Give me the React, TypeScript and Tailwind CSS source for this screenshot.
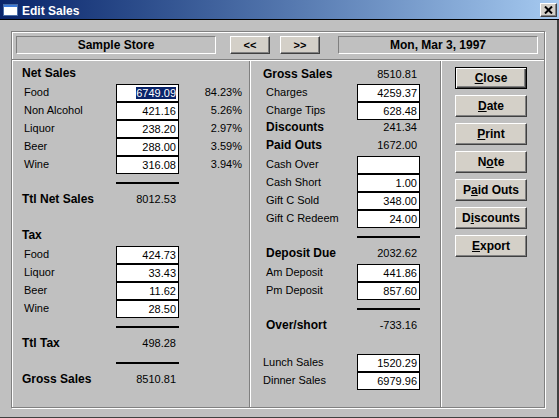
import React from 'react';

const raised =
  'border border-t-white border-l-white border-r-[#404040] border-b-[#404040] shadow-[inset_-1px_-1px_0_#808080]';

const Box = ({ value, selected }: { value?: string; selected?: boolean }) => (
  <div className="w-[63px] h-[18px] shrink-0 border border-black bg-white flex items-center justify-end pr-[2px] text-[11px] text-black">
    {selected ? <span className="bg-[#0a246a] text-white leading-[12px]">{value}</span> : value}
  </div>
);

const Header = ({ label, value, indent, className = '' }: { label: string; value?: string; indent?: boolean; className?: string }) => (
  <div className={`flex h-[18px] items-center ${className}`}>
    <div className={`w-[94px] shrink-0 text-[12px] font-bold ${indent ? 'pl-[3px]' : ''}`}>{label}</div>
    <div className="w-[63px] text-right pr-[3px] text-[11px]">{value}</div>
  </div>
);

const Row = ({ label, value, pct, selected, indent = 2 }: { label: string; value?: string; pct?: string; selected?: boolean; indent?: number }) => (
  <div className="flex h-[18px] items-center">
    <div className={`w-[94px] shrink-0 text-[11px] pb-[2px] ${indent === 3 ? 'pl-[3px]' : indent === 0 ? '' : 'pl-[2px]'}`}>{label}</div>
    <Box value={value} selected={selected} />
    {pct && <div className="w-[63px] text-right text-[11px] pb-[2px]">{pct}</div>}
  </div>
);

const Rule = ({ className = '' }: { className?: string }) => <div className={`ml-[94px] w-[63px] h-[2px] bg-black ${className}`} />;

const ActionButton = ({ pre, mn, post, isDefault }: { pre?: string; mn: string; post?: string; isDefault?: boolean }) => (
  <button
    className={`w-[72px] h-[22px] bg-[#d4d0c8] text-[12px] font-bold text-black leading-none ${
      isDefault
        ? 'border border-black shadow-[inset_1px_1px_0_#fff,inset_-1px_-1px_0_#404040,inset_-2px_-2px_0_#808080]'
        : raised
    }`}
  >
    {pre}
    <u className="underline-offset-1">{mn}</u>
    {post}
  </button>
);

export default function App() {
  return (
    <div className="w-[559px] h-[418px] flex flex-col bg-[#c0c0c0] text-black font-['Liberation_Sans',Arial,sans-serif] overflow-hidden">
      {/* Title bar */}
      <div className="h-[19px] shrink-0 flex items-center bg-gradient-to-r from-[#0a246a] to-[#a6caf0] pl-[3px] pr-[2px]">
        <svg width="15" height="12" viewBox="0 0 15 12" className="shrink-0">
          <rect x="0.5" y="0.5" width="14" height="11" fill="#fff" stroke="#4a6ea8" />
          <rect x="1" y="1" width="13" height="2" fill="#3a78d8" />
        </svg>
        <span className="ml-[4px] text-white font-bold text-[12px] pt-[2px]">Edit Sales</span>
        <div className={`ml-auto w-[17px] h-[14px] bg-[#d4d0c8] flex items-center justify-center ${raised}`}>
          <svg width="9" height="8" viewBox="0 0 9 8">
            <path d="M1 0.5 L8 7.5 M8 0.5 L1 7.5" stroke="#000" strokeWidth="2" />
          </svg>
        </div>
      </div>
      <div className="h-px shrink-0 bg-black" />

      {/* Body */}
      <div className="flex-1 pl-[11px] pt-[11px] border-r-2 border-r-[#404040] border-b border-b-[#404040]">
        <div className="w-[534px] h-[377px] flex flex-col border border-[#808080] shadow-[inset_1px_1px_0_#fff,1px_1px_0_#fff]">
          {/* Top row */}
          <div className="h-[27px] shrink-0 flex items-start pt-[4px] pl-[4px]">
            <div className="w-[200px] h-[18px] flex items-center justify-center border border-t-[#808080] border-l-[#808080] border-r-white border-b-white text-[12px] font-bold">
              Sample Store
            </div>
            <button className={`ml-[14px] w-[40px] h-[18px] bg-[#d4d0c8] text-[11px] font-bold leading-none ${raised}`}>&lt;&lt;</button>
            <button className={`ml-[10px] w-[40px] h-[18px] bg-[#d4d0c8] text-[11px] font-bold leading-none ${raised}`}>&gt;&gt;</button>
            <div className="ml-[18px] w-[200px] h-[18px] flex items-center justify-center border border-t-[#808080] border-l-[#808080] border-r-white border-b-white text-[12px] font-bold">
              Mon, Mar 3, 1997
            </div>
          </div>
          <div className="h-px shrink-0 bg-[#808080]" />
          <div className="h-px shrink-0 bg-white" />

          {/* Panels */}
          <div className="flex-1 flex">
            {/* Net sales / tax */}
            <div className="w-[237px] shrink-0 pl-[10px] pt-[3px]">
              <Header label="Net Sales" />
              <div className="mt-[2px]">
                <Row label="Food" value="6749.09" pct="84.23%" selected />
                <Row label="Non Alcohol" value="421.16" pct="5.26%" />
                <Row label="Liquor" value="238.20" pct="2.97%" />
                <Row label="Beer" value="288.00" pct="3.59%" />
                <Row label="Wine" value="316.08" pct="3.94%" />
              </div>
              <Rule className="mt-[8px]" />
              <Header label="Ttl Net Sales" value="8012.53" className="mt-[6px]" />
              <Header label="Tax" className="mt-[18px]" />
              <div className="mt-[2px]">
                <Row label="Food" value="424.73" />
                <Row label="Liquor" value="33.43" />
                <Row label="Beer" value="11.62" />
                <Row label="Wine" value="28.50" />
              </div>
              <Rule className="mt-[8px]" />
              <Header label="Ttl Tax" value="498.28" className="mt-[6px]" />
              <Rule className="mt-[10px]" />
              <Header label="Gross Sales" value="8510.81" className="mt-[6px]" />
            </div>
            <div className="w-px bg-[#808080]" />
            <div className="w-px bg-white" />

            {/* Gross / deposits */}
            <div className="w-[189px] shrink-0 pl-[12px] pt-[1px]">
              <Header label="Gross Sales" value="8510.81" className="mt-[3px]" />
              <div className="mt-px">
                <Row label="Charges" value="4259.37" indent={3} />
                <Row label="Charge Tips" value="628.48" indent={3} />
              </div>
              <Header label="Discounts" value="241.34" indent className="pb-[4px]" />
              <Header label="Paid Outs" value="1672.00" indent className="pb-[4px]" />
              <div>
                <Row label="Cash Over" indent={3} />
                <Row label="Cash Short" value="1.00" indent={3} />
                <Row label="Gift C Sold" value="348.00" indent={3} />
                <Row label="Gift C Redeem" value="24.00" indent={3} />
              </div>
              <Rule className="mt-[8px]" />
              <Header label="Deposit Due" value="2032.62" indent className="mt-[6px]" />
              <div className="mt-[2px]">
                <Row label="Am Deposit" value="441.86" indent={3} />
                <Row label="Pm Deposit" value="857.60" indent={3} />
              </div>
              <Rule className="mt-[8px]" />
              <Header label="Over/short" value="-733.16" indent className="mt-[6px]" />
              <div className="mt-[20px]">
                <Row label="Lunch Sales" value="1520.29" indent={0} />
                <Row label="Dinner Sales" value="6979.96" indent={0} />
              </div>
            </div>
            <div className="w-px bg-[#808080]" />
            <div className="w-px bg-white" />

            {/* Buttons */}
            <div className="flex-1 flex flex-col gap-[6px] pl-[13px] pt-[6px]">
              <ActionButton mn="C" post="lose" isDefault />
              <ActionButton mn="D" post="ate" />
              <ActionButton mn="P" post="rint" />
              <ActionButton pre="N" mn="o" post="te" />
              <ActionButton pre="P" mn="a" post="id Outs" />
              <ActionButton pre="D" mn="i" post="scounts" />
              <ActionButton mn="E" post="xport" />
            </div>
          </div>
        </div>
      </div>
    </div>
  );
}
